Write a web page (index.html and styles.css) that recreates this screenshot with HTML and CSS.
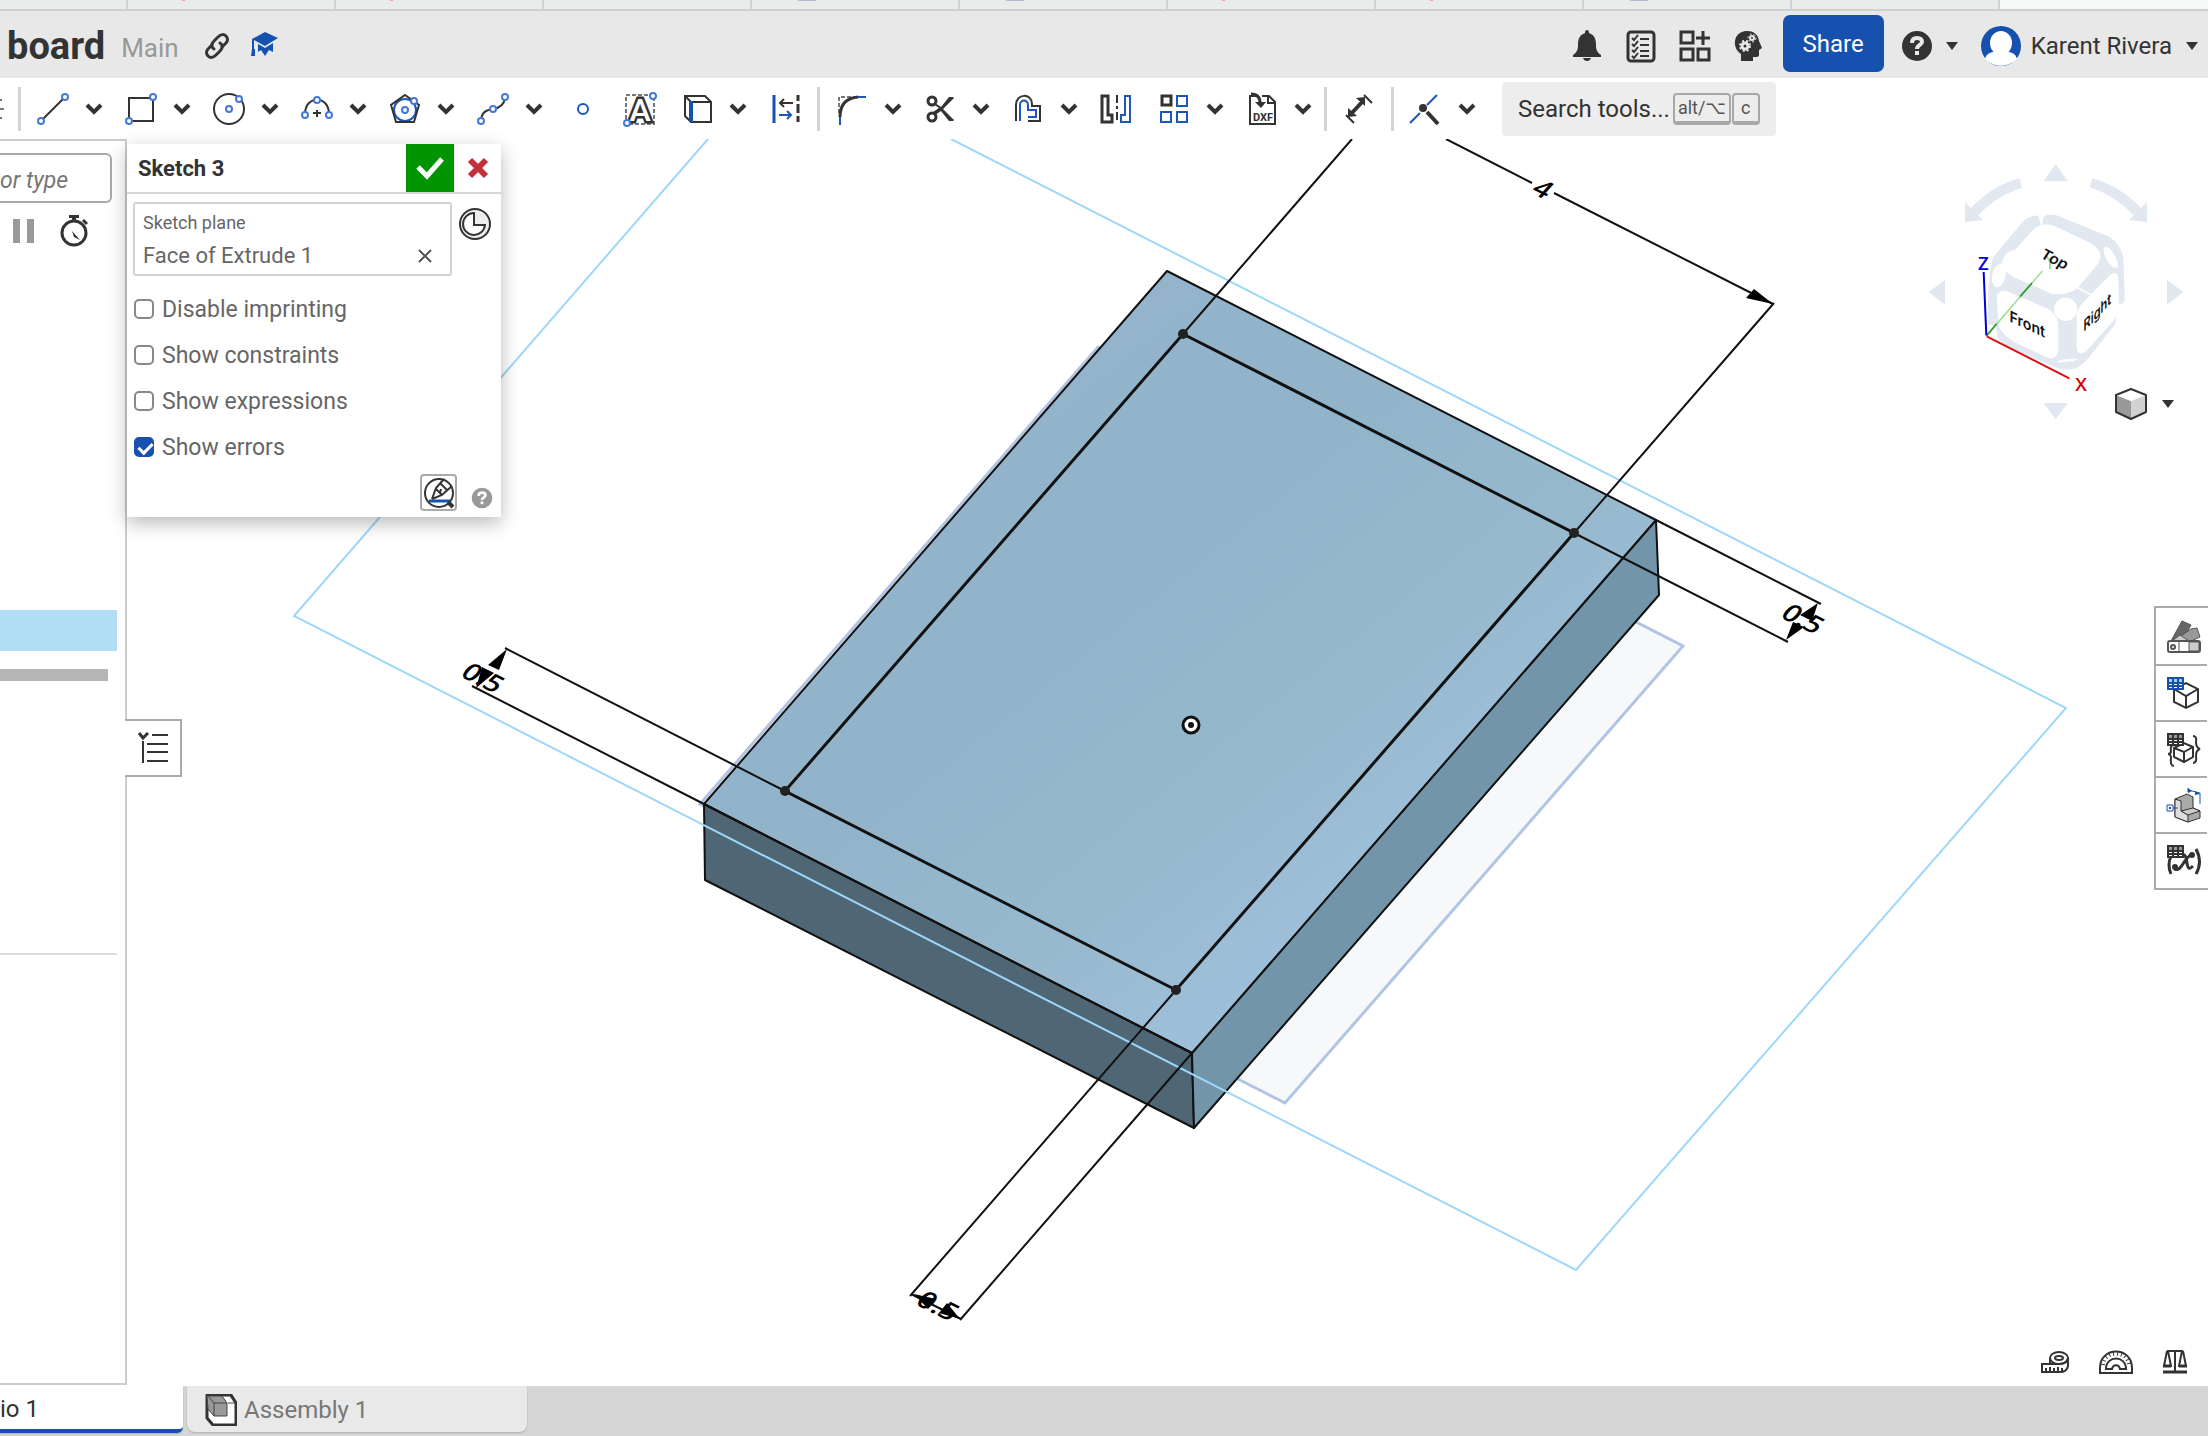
FILE: index.html
```html
<!DOCTYPE html>
<html lang="en">
<head>
<meta charset="utf-8">
<title>board | Main</title>
<link rel="stylesheet" href="styles.css">
</head>
<body>
<svg class="defs" width="0" height="0" aria-hidden="true">
  <symbol id="chev" viewBox="0 0 20 14"><path d="M3 3l7 7 7-7" fill="none" stroke="#333" stroke-width="4"/></symbol>
  <symbol id="caret" viewBox="0 0 12 8"><path d="M0 0h12L6 8z" fill="#333"/></symbol>
</svg>

<div class="browser-strip" aria-hidden="true">
  <span class="btab btab-first"></span><span class="btab pink"></span><span class="btab pink"></span><span class="btab"></span><span class="btab gray"></span><span class="btab gray"></span><span class="btab pink"></span><span class="btab pink"></span><span class="btab gray"></span><span class="btab"></span><span class="btab-active"></span>
</div>

<header class="topbar">
  <h1 class="doc-name">board</h1>
  <span class="branch">Main</span>
  <button class="icon-btn link-btn" aria-label="Copy link"><svg width="28" height="28" viewBox="0 0 28 28" fill="none" stroke="#333" stroke-width="3" stroke-linecap="round"><path d="M11 17c-3-2-3-5 0-8l4-4c3-3 6-3 8-1s2 5 0 7l-4 4"/><path d="M17 11c3 2 3 5 0 8l-4 4c-3 3-6 3-8 1s-2-5 0-7l4-4"/></svg></button>
  <button class="icon-btn" aria-label="Learning center"><svg width="28" height="28" viewBox="0 0 28 28" fill="#1651b0"><path d="M14 0l13 6-13 8L3 8v9H1V7z"/><path d="M7 12l7 4 8-5v9l-4-2-4 6-4-6-3 2zM1 17h3v7H0z"/></svg></button>
  <div class="spacer"></div>
  <button class="icon-btn" aria-label="Notifications"><svg width="32" height="34" viewBox="0 0 32 34" fill="#333"><path d="M14 4q0-3 2-3t2 3c6 2 7 7 7 12 0 5 1 7 5 10v2H2v-2c4-3 5-5 5-10 0-5 1-10 7-12zM12 29h8q-1 3-4 3t-4-3z"/></svg></button>
  <button class="icon-btn" aria-label="Tasks"><svg width="32" height="34" viewBox="0 0 32 34" fill="none" stroke="#333" stroke-width="2"><rect x="3" y="3" width="26" height="29" rx="3" stroke-width="3"/><path d="M7 9l2 2 4-5M7 15l2 2 4-5M7 21l2 2 4-5M7 27l2 2 4-5"/><path d="M15 10h9M15 16h9M15 22h9M15 27h9" stroke-width="2"/></svg></button>
  <button class="icon-btn" aria-label="App store"><svg width="32" height="34" viewBox="0 0 32 34" fill="none" stroke="#333" stroke-width="3"><rect x="2" y="3" width="12" height="11"/><rect x="2" y="20" width="12" height="11"/><rect x="19" y="20" width="11" height="11"/><path d="M24 2v14M17 9h14"/></svg></button>
  <button class="icon-btn" aria-label="AI advisor"><svg width="32" height="34" viewBox="0 0 32 34"><path d="M8 32v-7C0 20 0 8 7 4c7-4 18-2 19 8l3 7-3 2v5q0 2-4 2h-2v4z" fill="#333"/><circle cx="12" cy="17" r="3" fill="none" stroke="#e8e8e8" stroke-width="3"/><circle cx="12" cy="17" r="5" fill="none" stroke="#e8e8e8" stroke-width="2" stroke-dasharray="2 2"/><circle cx="19" cy="9" r="2" fill="none" stroke="#e8e8e8" stroke-width="2"/><circle cx="19" cy="9" r="4" fill="none" stroke="#e8e8e8" stroke-dasharray="2 2"/></svg></button>
  <button class="share">Share</button>
  <button class="menu-btn" aria-label="Help"><svg width="32" height="32" viewBox="0 0 32 32"><circle cx="16" cy="16" r="15" fill="#333"/><path d="M11 13q0-5 5-5t5 4c0 3-5 3-5 7" fill="none" stroke="#e8e8e8" stroke-width="4"/><path d="M14 21h4v4h-4z" fill="#e8e8e8"/></svg><svg width="12" height="8"><use href="#caret"/></svg></button>
  <button class="menu-btn user"><svg width="42" height="42" viewBox="0 0 42 42"><circle cx="21" cy="21" r="20" fill="#1651b0"/><ellipse cx="21" cy="18" rx="11" ry="12" fill="#fff"/><path d="M5 34c1-6 8-8 16-8s15 2 16 8c-9 9-23 9-32 0z" fill="#fff"/></svg><span>Karent Rivera</span><svg class="user-caret" width="12" height="8"><use href="#caret"/></svg></button>
</header>

<nav class="toolbar" aria-label="Sketch tools">
  <svg class="cut-tool" width="4" height="32" viewBox="0 0 4 32" stroke="#777" stroke-width="2"><path d="M0 7h2M0 16h4M0 25h2"/></svg>
  <span class="sep"></span>
  <div class="tool"><button class="tb" aria-label="Line"><svg viewBox="0 0 32 32"><path d="M5 27L27 5" class="k"/><circle cx="28" cy="4" r="3" class="n"/><circle cx="4" cy="28" r="3" class="n"/></svg></button><button class="dd" aria-label="Line options"><svg><use href="#chev"/></svg></button></div>
  <div class="tool"><button class="tb" aria-label="Rectangle"><svg viewBox="0 0 32 32"><path d="M4 5h24v23H4z" class="k"/><circle cx="28" cy="4" r="3" class="n"/><circle cx="4" cy="28" r="3" class="n"/></svg></button><button class="dd" aria-label="Rectangle options"><svg><use href="#chev"/></svg></button></div>
  <div class="tool"><button class="tb" aria-label="Circle"><svg viewBox="0 0 32 32"><circle cx="16" cy="16" r="15" class="k"/><circle cx="26" cy="6" r="3" class="n"/><circle cx="16" cy="16" r="3" class="n"/></svg></button><button class="dd" aria-label="Circle options"><svg><use href="#chev"/></svg></button></div>
  <div class="tool"><button class="tb" aria-label="Arc"><svg viewBox="0 0 32 32"><path d="M4 21C4 2 28 2 28 21M16 17v7M12 20h8" class="k"/><circle cx="16" cy="7" r="3" class="n"/><circle cx="4" cy="22" r="3" class="n"/><circle cx="28" cy="22" r="3" class="n"/></svg></button><button class="dd" aria-label="Arc options"><svg><use href="#chev"/></svg></button></div>
  <div class="tool"><button class="tb" aria-label="Polygon"><svg viewBox="0 0 32 32"><circle cx="16" cy="17" r="11" class="b"/><path d="M16 2l14 10-5 17H7L2 12z" class="k"/><circle cx="25" cy="8" r="3" class="n"/><circle cx="16" cy="17" r="3" class="n"/></svg></button><button class="dd" aria-label="Polygon options"><svg><use href="#chev"/></svg></button></div>
  <div class="tool"><button class="tb" aria-label="Spline"><svg viewBox="0 0 32 32"><path d="M4 27c1-8 5-10 12-11s11-4 12-11" class="k"/><circle cx="28" cy="4" r="3" class="n"/><circle cx="16" cy="16" r="3" class="n"/><circle cx="4" cy="28" r="3" class="n"/></svg></button><button class="dd" aria-label="Spline options"><svg><use href="#chev"/></svg></button></div>
  <div class="tool"><button class="tb" aria-label="Point"><svg viewBox="0 0 32 32"><circle cx="18" cy="16" r="5" class="b"/></svg></button></div>
  <div class="tool"><button class="tb" aria-label="Text"><svg viewBox="0 0 32 32"><path d="M3 2h28v29H3z" fill="none" stroke="#777" stroke-width="2" stroke-dasharray="4 2"/><text x="17" y="28" class="glyph-a">A</text><circle cx="30" cy="3" r="3" class="n"/><circle cx="4" cy="30" r="3" class="n"/></svg></button></div>
  <div class="tool"><button class="tb" aria-label="Use"><svg viewBox="0 0 32 32"><path d="M4 3h20l6 6v20H10L4 23zM10 9h20M4 3l6 6" class="k"/><path d="M10 8v21" stroke="#1651b0" stroke-width="4"/></svg></button><button class="dd" aria-label="Use options"><svg><use href="#chev"/></svg></button></div>
  <div class="tool"><button class="tb" aria-label="Dynamic mirror"><svg viewBox="0 0 32 32"><path d="M5 2v28" stroke="#1651b0" stroke-width="3"/><path d="M29 2v28" stroke="#333" stroke-width="3" stroke-dasharray="6 3 9 3"/><path d="M11 10h13M15 6l-4 4 4 4" class="k"/><path d="M10 22h12M18 18l4 4-4 4" class="b"/></svg></button></div>
  <span class="sep"></span>
  <div class="tool"><button class="tb" aria-label="Fillet"><svg viewBox="0 0 32 32"><path d="M3 20V4h12" fill="none" stroke="#777" stroke-width="2" stroke-dasharray="4 2"/><path d="M4 24C4 12 10 5 22 4" fill="none" stroke="#333" stroke-width="3"/><path d="M22 4h8M4 24v8" class="b"/></svg></button><button class="dd" aria-label="Fillet options"><svg><use href="#chev"/></svg></button></div>
  <div class="tool"><button class="tb" aria-label="Trim"><svg viewBox="0 0 32 32"><ellipse cx="8" cy="8" rx="4" ry="4" fill="none" stroke="#333" stroke-width="3"/><ellipse cx="8" cy="24" rx="4" ry="4" fill="none" stroke="#333" stroke-width="3"/><path d="M11 10l6 4 8-10h4l1 1-11 11 11 11-1 1h-4l-8-10-6 4-2-3 6-4-6-4z" fill="#333"/></svg></button><button class="dd" aria-label="Trim options"><svg><use href="#chev"/></svg></button></div>
  <div class="tool"><button class="tb" aria-label="Offset"><svg viewBox="0 0 32 32"><path d="M4 28V12c0-12 16-12 16-1v2h8v15H16" class="k"/><path d="M8 28V12c0-6 8-6 8 0v5h8v7h-8" class="b"/></svg></button><button class="dd" aria-label="Offset options"><svg><use href="#chev"/></svg></button></div>
  <div class="tool"><button class="tb" aria-label="Mirror"><svg viewBox="0 0 32 32"><path d="M2 3h6v19h4v7H2z" fill="none" stroke="#333" stroke-width="3"/><path d="M17 2v28" stroke="#333" stroke-width="2" stroke-dasharray="8 3 3 3"/><path d="M30 3h-5v19h-4v7h9z" class="b"/></svg></button></div>
  <div class="tool"><button class="tb" aria-label="Pattern"><svg viewBox="0 0 32 32"><path d="M4 3h9v9H4z" fill="none" stroke="#333" stroke-width="3"/><path d="M19 3h10v10H19zM3 19h10v10H3zM19 19h10v10H19z" class="b"/></svg></button><button class="dd" aria-label="Pattern options"><svg><use href="#chev"/></svg></button></div>
  <div class="tool"><button class="tb" aria-label="Insert DXF"><svg viewBox="0 0 32 32"><path d="M10 3H4v28h25V9l-6-6h-7M22 3v7h7" class="k"/><path d="M5 1q9 0 9 9" fill="none" stroke="#333" stroke-width="3"/><path d="M9 9h11l-5 6z" fill="#333"/><text x="17" y="28" class="glyph-dxf">DXF</text></svg></button><button class="dd" aria-label="Insert options"><svg><use href="#chev"/></svg></button></div>
  <span class="sep"></span>
  <div class="tool"><button class="tb" aria-label="Dimension"><svg viewBox="0 0 32 32"><path d="M7 22L20 8" stroke="#333" stroke-width="4"/><path d="M13 5l9-1v9zM5 15v9l9-1z" fill="#333"/><path d="M21 2l8 8M3 22l8 8" class="k"/></svg></button></div>
  <span class="sep"></span>
  <div class="tool"><button class="tb" aria-label="Coincident"><svg viewBox="0 0 32 32"><path d="M27 2L17 12M10 20L0 30" class="b"/><circle cx="13" cy="15" r="4" fill="#333"/><path d="M17 19l11 12" stroke="#333" stroke-width="4"/></svg></button><button class="dd" aria-label="Constraint options"><svg><use href="#chev"/></svg></button></div>
  <button class="search">Search tools... <kbd>alt/⌥</kbd><kbd class="key">c</kbd></button>
</nav>

<main class="workspace">
  <aside class="feature-list">
    <input class="filter" type="text" placeholder="or type" aria-label="Filter by name or type">
    <div class="feature-tools">
      <svg width="22" height="24"><path d="M0 0h7v24H0zM14 0h7v24h-7z" fill="#999"/></svg>
      <svg width="28" height="32" viewBox="0 0 28 32"><circle cx="14" cy="18" r="12" fill="none" stroke="#333" stroke-width="3"/><path d="M9 0h10v3h-3v3h-4V3H9zM22 6l2-2 4 4-2 2zM12 16l8 9-6-3z" fill="#333"/></svg>
    </div>
    <div class="selected-row"></div>
    <div class="rollback"></div>
    <div class="parts-line"></div>
  </aside>

  <section class="canvas">
    <svg class="scene" viewBox="127 139 2081 1247" preserveAspectRatio="xMidYMid slice" role="img" aria-label="Sketch on face of extrude">
      <defs>
        <linearGradient id="top" gradientUnits="userSpaceOnUse" x1="900" y1="500" x2="1270" y2="960"><stop offset="0" stop-color="#93b4cb"/><stop offset=".35" stop-color="#91b4ca"/><stop offset=".75" stop-color="#97b9ce"/><stop offset="1" stop-color="#9ebfd9"/></linearGradient>
      </defs>
      <path d="M700 804L1098 347 1683 646 1285 1103z" fill="#f6f8fa" stroke="#b1c5e3" stroke-width="3"/>
      <g stroke="#111" stroke-width="2" stroke-linejoin="round">
        <path d="M704 804L1192 1053 1194 1128 705 880z" fill="#4f6775"/>
        <path d="M1192 1053L1656 520 1659 595 1194 1128z" fill="#7295aa"/>
        <path d="M1167 271L1656 520 1192 1053 704 804z" fill="url(#top)"/>
      </g>
      <path d="M708 139L294 616 1576 1270 2066 708 951 139" fill="none" stroke="#9fd7fa" stroke-width="2"/>
      <path d="M704 804L1192 1053" stroke="#111" stroke-width="2"/>
      <path d="M1183 334L1574 533 1176 990 785 791z" fill="none" stroke="#111" stroke-width="3"/>
      <g fill="none" stroke="#111" stroke-width="2">
        <path d="M1183 334L1352 139M1574 533L1774 303M1446 139L1532 183M1554 193L1773 304"/>
        <path d="M785 791L505 648M704 804L472 686"/>
        <path d="M1656 520L1821 604M1574 533L1788 642"/>
        <path d="M1176 990L910 1296M1192 1053L960 1320M911 1294l50 25"/>
      </g>
      <g fill="#222"><circle cx="1183" cy="334" r="5"/><circle cx="1574" cy="533" r="5"/><circle cx="1176" cy="990" r="5"/><circle cx="785" cy="791" r="5"/></g>
      <path d="M1773 304l-27-6 8-9zM507 649l-19 16 11 5zM476 688l6-21 12 6zM1818 603l-18 12 12 6zM1786 640l7-18 11 5zM914 1294l22 5-8 10zM960 1319l-13-16-8 10z" fill="#000"/>
      <circle cx="1191" cy="725" r="8" fill="#fff" stroke="#111" stroke-width="3"/><circle cx="1191" cy="725" r="3" fill="#111"/>
      <g class="dim">
        <text transform="matrix(.87 .44 -.6 .68 1543 189)" y="10">4</text>
        <text transform="matrix(.87 .44 -.6 .68 483 678)" y="10">0.5</text>
        <text transform="matrix(.87 .44 -.6 .68 1803 619)" y="10">0.5</text>
        <text transform="matrix(.87 .44 -.6 .68 938 1306)" y="10">0.5</text>
      </g>
    </svg>

    <form class="dialog">
      <div class="dialog-head">
        <h2>Sketch 3</h2>
        <button type="button" class="ok" aria-label="Accept"><svg width="30" height="24" viewBox="0 0 30 24"><path d="M3 11l9 9L27 3" fill="none" stroke="#fff" stroke-width="5"/></svg></button>
        <button type="button" class="cancel" aria-label="Cancel"><svg width="22" height="22" viewBox="0 0 22 22"><path d="M3 3l16 16M19 3L3 19" stroke="#c4303a" stroke-width="6"/></svg></button>
      </div>
      <div class="plane-row">
        <div class="plane-box">
          <span class="plane-label">Sketch plane</span>
          <div class="plane-value"><span>Face of Extrude 1</span><button type="button" aria-label="Remove"><svg width="14" height="14" viewBox="0 0 14 14"><path d="M1 1l12 12M13 1L1 13" stroke="#555" stroke-width="2"/></svg></button></div>
        </div>
        <button type="button" class="icon-btn" aria-label="Final"><svg width="32" height="32" viewBox="0 0 32 32" stroke="#333" stroke-width="2"><circle cx="16" cy="16" r="15" fill="#eee"/><path d="M15 5a11 11 0 1 0 11 12H15z" fill="#fff"/></svg></button>
      </div>
      <label><input type="checkbox"><span>Disable imprinting</span></label>
      <label><input type="checkbox"><span>Show constraints</span></label>
      <label><input type="checkbox"><span>Show expressions</span></label>
      <label><input type="checkbox" checked><span>Show errors</span></label>
      <div class="dialog-foot">
        <button type="button" class="view-normal" aria-label="View normal to"><svg width="32" height="32" viewBox="0 0 32 32"><circle cx="16" cy="16" r="14" fill="#fff" stroke="#333" stroke-width="2"/><path d="M6 24h21" stroke="#1651b0" stroke-width="3"/><path d="M9 22l4-11 8-9M9 22l10-4 10-9M13 12l6 6M18 7l6 6M18 12l-1 4" fill="none" stroke="#333" stroke-width="2"/><path d="M25 25l5 5" stroke="#333" stroke-width="4"/></svg></button>
        <button type="button" class="icon-btn" aria-label="Help"><svg width="22" height="22" viewBox="0 0 32 32"><circle cx="16" cy="16" r="15" fill="#999"/><path d="M11 13q0-5 5-5t5 4c0 3-5 3-5 7" fill="none" stroke="#fff" stroke-width="4"/><path d="M14 21h4v4h-4z" fill="#fff"/></svg></button>
      </div>
    </form>

    <button class="list-toggle" aria-label="Toggle feature list"><svg width="32" height="32" viewBox="0 0 32 32" fill="none" stroke="#333" stroke-width="2"><path d="M2 1l4 5 5-5" stroke-width="3"/><path d="M6 9v22M15 3h16M10 12h21M10 20h21M10 29h21"/></svg></button>

    <div class="view-cube">
      <svg width="308" height="280" viewBox="0 0 924 840">
        <g fill="#e1e8f0">
          <path d="M467 43l37 51h-74zM467 808l37-49h-74zM86 426l49-37v75zM850 426l-49-37v75z"/>
          <path d="M358 85l8 29q-75 22-131 82l14 14-54 6V156l18 18q63-66 145-89zM577 85l-7 27q75 24 131 84l-14 14 54 6V156l-18 18q-63-66-146-89z"/>
          <path d="M415 197q-28-2-52 24l-80 96q-23 40-18 206l22 4 6 35q10 18 30 28l150 65q30 8 60-2l25-20 88-110 4-30 6-30q20 0 18-20l-4-120q-5-35-40-62L470 196q-50-12-45 34z"/>
        </g>
        <g fill="#fff">
          <path d="M425 195v36M350 300l50-58q25-22 60-12l110 52q45 25 18 62l-55 65q-25 25-75 20l-115-50q-55-30-18-70z" stroke="#fff" stroke-width="6"/>
          <path d="M290 440q5-25 35-15l120 52q30 18 30 55v70q-5 30-35 20l-95-45q-50-30-50-62zM530 500q0-18 15-38l80-82q22-22 30 0l2 95q-3 20-15 35l-85 95q-25 15-27-15z"/>
          <ellipse cx="297" cy="376" rx="20" ry="36" transform="rotate(12 297 376)"/><circle cx="497" cy="478" r="35"/><ellipse cx="632" cy="322" rx="14" ry="36" transform="rotate(-28 632 322)"/>
          <path d="M468 635q30-12 70-8-35 14-70 8z"/>
          <path d="M528 410l45 25" stroke="#fff" stroke-width="5"/>
        </g>
        <path d="M260 557l167-194" stroke="#9fdf9f" stroke-width="5"/><path d="M260 557l30-36M360 440l36-41" stroke="#2a9a2a" stroke-width="5"/>
        <path d="M436 315l14 18 15-18M450 333v24" stroke="#9fe09f" stroke-width="6" fill="none"/>
        <path d="M251 366l8 190" stroke="#0000dd" stroke-width="6"/><path d="M260 559l248 126" stroke="#dd1111" stroke-width="6"/>
        <text x="250" y="360" class="axis axis-z">Z</text><text x="543" y="723" class="axis axis-x">X</text>
        <text class="face" transform="matrix(.9 .45 -.5 .8 464 328)" y="16">Top</text>
        <text class="face" transform="matrix(.9 .42 0 1 382 524)" y="15">Front</text>
        <text class="face" transform="matrix(.7 -.75 0 1 592 490)" y="13">Right</text>
      </svg>
      <button class="view-menu" aria-label="View options"><svg width="32" height="32" viewBox="0 0 32 32" stroke-linejoin="round"><path d="M1 7l15 6v18L1 24z" fill="#999"/><path d="M16 13l15-6v17l-15 7z" fill="#d2d2d2"/><path d="M1 7l15-6 15 6-15 6z" fill="#fff"/><path d="M1 7l15-6 15 6v17l-15 7-15-7z" fill="none" stroke="#333" stroke-width="2"/></svg><svg width="12" height="8"><use href="#caret"/></svg></button>
    </div>

    <div class="side-strip">
      <button aria-label="Appearance"><svg viewBox="0 0 36 36" stroke="#555"><path d="M5 23L16 3l9 4-10 18z" fill="#666"/><path d="M8 23l17-12 6-1 3 9-20 9z" fill="#999"/><path d="M6 23l8-6 9 6z" fill="#ccc"/><rect x="2" y="23" width="32" height="11" rx="2" fill="#fff" stroke-width="2"/><path d="M23 24h10v9H23z" fill="#ccc"/><path d="M13 23v11"/><circle cx="7" cy="29" r="2" fill="none" stroke-width="2"/></svg></button>
      <button aria-label="Configurations"><svg viewBox="0 0 36 36"><path d="M8 14l12-6 12 6v13l-12 6-12-6zM8 14l12 7 12-7M20 21v12" fill="#fff" stroke="#333" stroke-width="2"/><path d="M1 2h17v13H1z" fill="#1651b0"/><path d="M3 4h3v3H3zM8 4h3v3H8zM13 4h3v3h-3z" fill="#9cd4f8"/><path d="M3 9h3v1H3zM8 9h3v1H8zM13 9h3v1h-3zM3 12h3v1H3zM8 12h3v1H8zM13 12h3v1h-3z" fill="#fff"/></svg></button>
      <button aria-label="Custom tables"><svg viewBox="0 0 36 36"><path d="M8 17l10-5 9 4v10l-9 5-10-5zM8 17l10 4 9-5M18 21v10M8 14q-4 0-3 6 0 3-3 3 3 0 3 4-1 8 3 8M27 5q4 0 3 6 0 6 4 7-4 1-4 7 1 7-3 7" fill="none" stroke="#333" stroke-width="2"/><path d="M1 2h17v13H1z" fill="#333"/><path d="M3 4h3v3H3zM8 4h3v3H8zM13 4h3v3h-3z" fill="#999"/><path d="M3 9h3v1H3zM8 9h3v1H8zM13 9h3v1h-3zM3 12h3v1H3zM8 12h3v1H8zM13 12h3v1h-3z" fill="#fff"/></svg></button>
      <button aria-label="Named views"><svg viewBox="0 0 36 36"><g stroke="#333" stroke-width="1"><path d="M9 12l12-5 6 3v11l7 3v7l-12 4-13-5z" fill="#aaa"/><path d="M9 12l6 2v10l7 4v7L9 30z" fill="#ddd"/><path d="M15 24l12-3 7 3-12 4z" fill="#ccc"/></g><path d="M22 1v4M22 3l12 3v11M1 18h6v6H1zM7 21h5" fill="none" stroke="#1651b0"/><path d="M22 1l4 3-4 2zM3 20h2v2H3zM34 7l-5-3v4z" fill="#1651b0"/></svg></button>
      <button aria-label="Variables"><svg viewBox="0 0 36 36"><path d="M5 13q-4 9 0 18M30 6q7 13 0 25M13 13c6-4 7 0 8 7s3 6 6 3M8 26c6 2 8-4 11-8s5-7 8-5" fill="none" stroke="#333" stroke-width="3"/><circle cx="26" cy="12" r="3" fill="#333"/><circle cx="9" cy="24" r="3" fill="#333"/><path d="M1 2h17v13H1z" fill="#333"/><path d="M3 4h3v3H3zM8 4h3v3H8zM13 4h3v3h-3z" fill="#999"/><path d="M3 9h3v1H3zM8 9h3v1H8zM13 9h3v1h-3zM3 12h3v1H3zM8 12h3v1H8zM13 12h3v1h-3z" fill="#fff"/></svg></button>
    </div>

    <div class="measure">
      <button class="icon-btn" aria-label="Measure"><svg width="30" height="26" viewBox="2 0 30 26" fill="none" stroke="#333" stroke-width="2"><ellipse cx="21" cy="9" rx="9" ry="6"/><ellipse cx="21" cy="9" rx="4" ry="2"/><path d="M30 9v8q-1 6-8 6H4V15h18q8-1 8-6M12 9v6M8 22v-3M12 22v-4M16 22v-3M20 22v-4M24 22v-3"/></svg></button>
      <button class="icon-btn" aria-label="Angle"><svg width="36" height="26" viewBox="0 0 36 26" fill="none" stroke="#333" stroke-width="2"><path d="M2 24V19C2-3 34-3 34 19v5z"/><path d="M8 20c0-14 20-14 20 0h-6c-1-5-7-5-8 0z"/><path d="M5 16C6 1 30 1 31 16" stroke-dasharray="1 3" stroke-width="4"/></svg></button>
      <button class="icon-btn" aria-label="Mass properties"><svg width="26" height="26" viewBox="0 0 26 26" fill="none" stroke="#333" stroke-width="2"><path d="M5 2h16M13 2v20M5 2L2 17h7L6 2M20 2l-3 15h7L21 2"/><path d="M1 17h8M17 17h8M1 23h24" stroke-width="3"/></svg></button>
    </div>
  </section>
</main>

<footer class="tabs">
  <button class="tab tab-active">io 1</button>
  <button class="tab"><svg width="32" height="32" viewBox="0 0 32 32" stroke-linejoin="round"><path d="M2 1h24l5 8v22H8l-6-7z" fill="#fff" stroke="#333" stroke-width="3"/><path d="M2 2h15l5 7v13H9l-6-7z" fill="#999" stroke="#444"/><path d="M3 2l6 7h13M9 9v13M25 2l5 7h-7" fill="none" stroke="#444"/></svg>Assembly 1</button>
</footer>
</body>
</html>
```
FILE: styles.css
```css
* { box-sizing: border-box; }
html, body { margin: 0; }
body {
  min-height: 100vh;
  display: flex;
  flex-direction: column;
  overflow-x: hidden;
  background: #fff;
  color: #333;
  font: 24px/28px Roboto, "Liberation Sans", sans-serif;
}
button {
  margin: 0; padding: 0; border: 0; background: none;
  font: inherit; color: inherit;
  display: flex; align-items: center; justify-content: center;
}
svg { display: block; flex: none; }
.defs { position: absolute; }

/* browser strip */
.browser-strip { display: flex; height: 11px; background: #e9ecea; border-bottom: 2px solid #cdd0ce; overflow: hidden; }
.btab { flex: none; width: 208px; border-right: 2px solid #cfd3d1; }
.btab-first { width: 128px; }
.btab-active { flex: 1; background: #f7faf9; }
.btab::before { content: ""; display: block; margin-left: 46px; width: 18px; height: 1px; }
.gray::before { background: #b9b9cc; }
.pink::before { width: 3px; margin-left: 54px; background: #e9a0b5; }

/* document header */
.topbar { display: flex; align-items: center; height: 67px; padding: 2px 10px 0 7px; background: #e8e8e8; white-space: nowrap; }
.doc-name { margin: 0; font-size: 38px; line-height: 40px; font-weight: 700; }
.branch { margin: 4px 24px 0 16px; font-size: 26px; color: #999; }
.icon-btn { flex: none; }
.link-btn { margin-right: 20px; }
.spacer { flex: 1; }
.topbar .spacer ~ .icon-btn { margin-right: 22px; }
.share { width: 101px; height: 57px; margin: 0 17px 4px -4px; border-radius: 7px; background: #1651b0; color: #fff; }
.menu-btn { gap: 13px; margin-right: 22px; }
.user { gap: 9px; margin-right: 0; }
.user-caret { margin-left: 5px; }

/* sketch toolbar */
.toolbar { display: flex; align-items: center; gap: 6px; height: 61px; background: #fff; }
.cut-tool { margin-right: 8px; }
.sep { flex: none; width: 3px; height: 44px; background: #d4d4d4; }
.tool { display: flex; flex: none; }
.tb { width: 52px; height: 44px; }
.tb svg { width: 32px; height: 32px; overflow: visible; }
.dd { width: 30px; height: 44px; }
.dd svg { width: 20px; height: 14px; }
.k { fill: none; stroke: #333; stroke-width: 2; }
.b { fill: none; stroke: #1b57bd; stroke-width: 2; }
.n { fill: #fff; stroke: #4478d4; stroke-width: 2; }
.glyph-a { font: 500 32px Roboto, sans-serif; text-anchor: middle; fill: #fff; stroke: #333; stroke-width: 5; paint-order: stroke; }
.glyph-dxf { font: 700 11px Roboto, sans-serif; text-anchor: middle; fill: #333; }
.search { gap: 1px; height: 54px; margin-left: 14px; padding: 0 16px; background: #ededed; border-radius: 4px; white-space: nowrap; }
kbd { height: 32px; padding: 0 3px; border: 2px solid #a8a8a8; border-bottom-width: 4px; border-radius: 4px; font: 18px/26px Roboto, "DejaVu Sans", sans-serif; color: #555; }
kbd:first-of-type { margin-left: 2px; }
.key { padding: 0 7px; }

/* workspace */
.workspace { flex: 1; display: grid; grid-template-columns: 127px 1fr; }
.feature-list { border: 2px solid #ccc; border-left: 0; margin-bottom: 1px; }
.filter { display: block; width: 112px; height: 50px; margin-top: 12px; padding: 4px 0 0; border: 2px solid #aaa; border-left: 0; border-radius: 0 6px 6px 0; font: italic 23px/28px Roboto, sans-serif; color: #777; }
.filter::placeholder { color: #777; opacity: 1; }
.feature-tools { display: flex; align-items: center; gap: 25px; margin: 12px 0 0 13px; }
.selected-row { width: 117px; height: 41px; margin-top: 363px; background: #b1ddf6; }
.rollback { width: 108px; height: 12px; margin-top: 18px; background: #b5b5b5; }
.parts-line { width: 117px; height: 2px; margin-top: 272px; background: #ddd; }

.canvas { position: relative; display: flex; overflow: visible; min-width: 0; }
.scene { flex: 1; min-width: 0; }
.dim { font: 600 29px "Open Sans", sans-serif; text-anchor: middle; fill: #000; }

/* sketch dialog */
.dialog { position: absolute; left: 0; top: 5px; width: 374px; background: #fff; box-shadow: 0 6px 18px rgba(0, 0, 0, .28); color: #666; font-size: 23px; }
.dialog-head { display: flex; height: 50px; padding-left: 11px; border-bottom: 2px solid #d6d6d6; color: #333; }
.dialog h2 { flex: 1; margin: 0; font-size: 22px; line-height: 50px; font-weight: 700; }
.ok { width: 48px; height: 48px; background: #009400; }
.cancel { width: 47px; height: 48px; }
.plane-row { display: flex; align-items: flex-start; gap: 7px; margin: 8px 0 10px 6px; }
.plane-box { width: 319px; height: 74px; padding: 6px 18px 0 8px; border: 2px solid #d2d2d2; border-radius: 3px; }
.plane-row .icon-btn { margin-top: 6px; }
.plane-label { display: block; font-size: 18px; line-height: 26px; }
.plane-value { display: flex; justify-content: space-between; font-size: 22px; line-height: 40px; }
.dialog label { display: flex; align-items: center; gap: 8px; height: 46px; padding-left: 7px; }
.dialog label span { padding-top: 2px; }
.dialog input { appearance: none; width: 20px; height: 20px; margin: 0; border: 2px solid #888; border-radius: 5px; background: #fff; }
.dialog input:checked { border-color: #1651b0; background: #1651b0; position: relative; }
.dialog input:checked::after { content: ""; position: absolute; left: 5px; top: 1px; width: 6px; height: 11px; border: solid #fff; border-width: 0 3px 3px 0; transform: rotate(45deg); }
.dialog-foot { display: flex; justify-content: flex-end; align-items: flex-end; gap: 14px; padding: 4px 8px 6px 0; }
.dialog-foot .icon-btn { margin-bottom: 2px; }
.view-normal { width: 37px; height: 37px; border: 2px solid #aaa; border-radius: 4px; }

.list-toggle { position: absolute; left: -2px; top: 580px; width: 57px; height: 58px; background: #fff; border: 2px solid #aaa; border-left: 0; }

/* view controls */
.view-cube { position: absolute; right: 0; top: 11px; }
.view-menu { position: absolute; right: 34px; bottom: 10px; gap: 15px; }
.axis { font: 600 56px "Open Sans", sans-serif; text-anchor: middle; }
.axis-z { fill: #0000dd; }
.axis-x { fill: #d40000; }
.face { font: 600 47px Inter, sans-serif; text-anchor: middle; fill: #111; }

.side-strip { position: absolute; right: 0; top: 467px; width: 54px; border: 2px solid #aaa; border-right: 0; background: #fff; }
.side-strip button { width: 51px; height: 56px; padding-left: 4px; }
.side-strip button + button { border-top: 2px solid #aaa; }
.side-strip svg { width: 36px; height: 36px; }

.measure { position: absolute; right: 20px; bottom: 11px; display: flex; gap: 28px; }

/* document tabs */
.tabs { display: flex; gap: 4px; height: 50px; padding-bottom: 3px; background: #d6d6d6; }
.tab { width: 340px; height: 46px; padding: 2px 18px 0; gap: 7px; justify-content: flex-start; background: #e9e9e9; border-radius: 0 0 8px 8px; color: #777; box-shadow: 0 1px 2px rgba(0, 0, 0, .2); }
.tab-active { width: 183px; height: 47px; padding: 3px 0 0; background: #fff; border-bottom: 4px solid #1651b0; border-radius: 0 0 6px 0; color: #333; }
```
